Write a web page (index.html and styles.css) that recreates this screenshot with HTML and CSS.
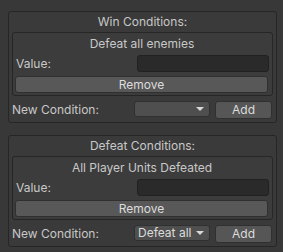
FILE: index.html
```html
<!DOCTYPE html>
<html lang="en">
<head>
    <meta charset="UTF-8">
    <title>Conditions</title>
    <link rel="stylesheet" href="styles.css">
</head>
<body>
    <div class="section">
        <div class="section-title">Win Conditions:</div>
        <div class="condition">
            <div class="condition-name">Defeat all enemies</div>
            <div class="value-row">
                <span class="value-label">Value:</span>
                <div class="value-input"></div>
            </div>
            <div class="button remove-button">Remove</div>
        </div>
        <div class="new-row">
            <span class="new-label">New Condition:</span>
            <div class="dropdown">
                <span class="dropdown-text"></span>
                <span class="dropdown-arrow"></span>
            </div>
            <div class="button add-button">Add</div>
        </div>
    </div>

    <div class="section">
        <div class="section-title">Defeat Conditions:</div>
        <div class="condition">
            <div class="condition-name">All Player Units Defeated</div>
            <div class="value-row">
                <span class="value-label">Value:</span>
                <div class="value-input"></div>
            </div>
            <div class="button remove-button">Remove</div>
        </div>
        <div class="new-row">
            <span class="new-label">New Condition:</span>
            <div class="dropdown">
                <span class="dropdown-text">Defeat all</span>
                <span class="dropdown-arrow"></span>
            </div>
            <div class="button add-button">Add</div>
        </div>
    </div>
</body>
</html>
```

FILE: styles.css
```css
body {
    margin: 0;
    padding: 11px 0 0 0;
    background-color: #383838;
    font-family: 'Inter', 'Noto Sans', sans-serif;
    font-size: 12px;
    color: #c8c8c8;
}

.section {
    width: 269px;
    box-sizing: border-box;
    margin: 0 0 12px 8px;
    padding: 0 3px 3px 3px;
    background-color: #3a3a3a;
    border: 1px solid #262626;
    border-radius: 3px;
}

.section-title {
    height: 20px;
    line-height: 20px;
    text-align: center;
}

.condition {
    box-sizing: border-box;
    padding: 0 3px 2px 2px;
    border: 1px solid #262626;
    border-radius: 3px;
    background-color: #3c3c3c;
}

.condition-name {
    height: 21px;
    line-height: 21px;
    text-align: center;
}

.value-row {
    display: flex;
    align-items: center;
    height: 17px;
    margin-top: 1px;
}

.value-label {
    width: 121px;
    padding-left: 1px;
}

.value-input {
    flex: 1;
    height: 17px;
    box-sizing: border-box;
    background-color: #2a2a2a;
    border: 1px solid #212121;
    border-radius: 3px;
}

.button {
    box-sizing: border-box;
    height: 17px;
    line-height: 15px;
    text-align: center;
    background-color: #585858;
    border: 1px solid #303030;
    border-radius: 3px;
    color: #dcdcdc;
}

.remove-button {
    margin: 4px 1px 0 0;
}

.new-row {
    display: flex;
    align-items: flex-start;
    margin-top: 5px;
    height: 18px;
}

.new-label {
    width: 122px;
    line-height: 17px;
}

.dropdown {
    display: flex;
    align-items: center;
    width: 76px;
    height: 16px;
    box-sizing: border-box;
    padding: 0 5px 0 3px;
    background-color: #4f4f4f;
    border: 1px solid #303030;
    border-radius: 3px;
    color: #dcdcdc;
}

.dropdown-text {
    flex: 1;
    overflow: hidden;
    white-space: nowrap;
    line-height: 14px;
}

.dropdown-arrow {
    width: 0;
    height: 0;
    margin-left: 3px;
    border-left: 4px solid transparent;
    border-right: 4px solid transparent;
    border-top: 4px solid #d8d8d8;
}

.add-button {
    width: 57px;
    height: 18px;
    line-height: 16px;
    margin-left: 5px;
    background-color: #565656;
}
```
